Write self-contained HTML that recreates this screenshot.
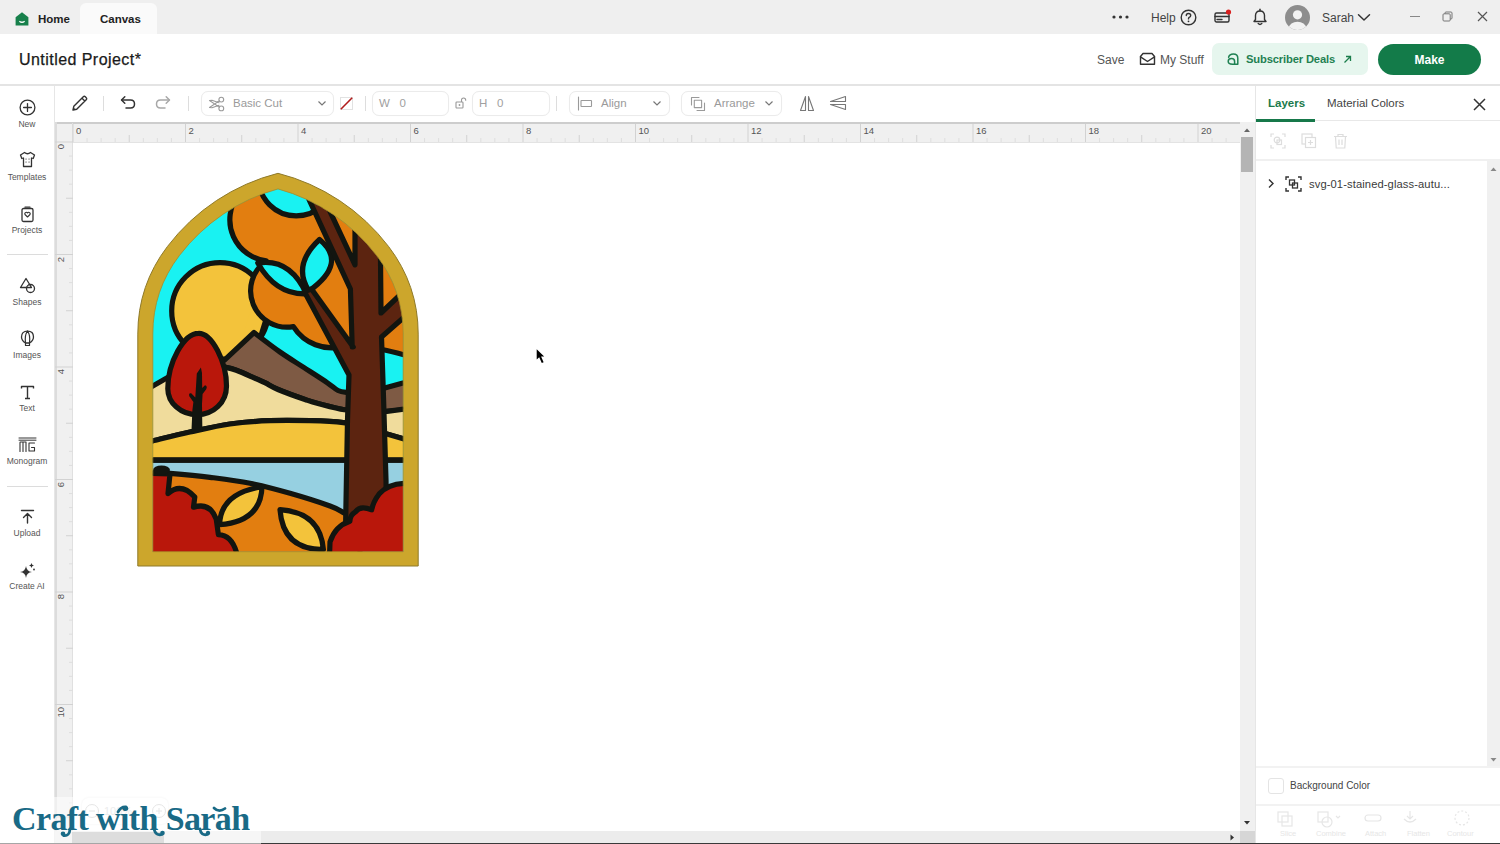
<!DOCTYPE html>
<html><head><meta charset="utf-8">
<style>
*{margin:0;padding:0;box-sizing:border-box}
html,body{width:1500px;height:844px;overflow:hidden;background:#fff;font-family:"Liberation Sans",sans-serif;color:#222}
.a{position:absolute}
.t{position:absolute;white-space:nowrap;line-height:1}
svg{position:absolute;overflow:visible}
.g{stroke:#333;fill:none;stroke-width:1.2;stroke-linecap:round;stroke-linejoin:round}
.lg{stroke:#9a9a9a;fill:none;stroke-width:1.1;stroke-linecap:round;stroke-linejoin:round}
.side{position:absolute;width:54px;left:0;text-align:center;font-size:8.5px;color:#555;line-height:1}
.box{position:absolute;border:1px solid #ebebeb;border-radius:7px;background:#fff;box-shadow:0 0 1px rgba(0,0,0,0.04)}
.ft{font-size:11.5px;color:#9a9a9a}
</style></head><body>
<!-- top bar -->
<div class="a" style="left:0;top:0;width:1500px;height:34px;background:#efefef"></div>
<div class="a" style="left:80px;top:3px;width:77px;height:31px;background:#fafafa;border-radius:6px 6px 0 0"></div>
<svg style="left:15px;top:12px" width="14" height="14" viewBox="0 0 14 14"><path d="M0.6 5.2 L7 0.3 L13.4 5.2 V13.6 H0.6 Z" fill="#17804b"/><path d="M4.4 9.2 Q7 11.3 9.6 9.2" stroke="#fff" stroke-width="1.3" fill="none"/></svg>
<div class="t" style="left:38px;top:14px;font-size:11.5px;font-weight:bold;color:#222">Home</div>
<div class="t" style="left:100px;top:14px;font-size:11.5px;font-weight:bold;color:#222">Canvas</div>
<!-- dots -->
<svg style="left:1112px;top:15px" width="17" height="4" viewBox="0 0 17 4"><circle cx="2" cy="2" r="1.6" fill="#333"/><circle cx="8.5" cy="2" r="1.6" fill="#333"/><circle cx="15" cy="2" r="1.6" fill="#333"/></svg>
<div class="t" style="left:1151px;top:12px;font-size:12px;color:#444">Help</div>
<svg style="left:1180px;top:9px" width="17" height="17" viewBox="0 0 17 17"><circle cx="8.5" cy="8.5" r="7.3" class="g" style="stroke-width:1.4"/><path d="M6.3 6.6 Q6.3 4.5 8.5 4.5 Q10.7 4.5 10.7 6.5 Q10.7 7.8 9.2 8.4 Q8.5 8.8 8.5 9.9" class="g" style="stroke-width:1.4"/><circle cx="8.5" cy="12.3" r="0.9" fill="#333"/></svg>
<svg style="left:1214px;top:9px" width="18" height="16" viewBox="0 0 18 16"><rect x="1" y="4" width="14" height="9" rx="1.5" class="g" style="stroke-width:1.4"/><path d="M1 7.5 H15 M3 10.5 H8" class="g" style="stroke-width:1.4"/><circle cx="14.5" cy="3" r="2.6" fill="#d9201f"/></svg>
<svg style="left:1252px;top:8px" width="16" height="18" viewBox="0 0 16 18"><path d="M2 13.5 H14 L12.5 11.5 V7.5 Q12.5 3 8 3 Q3.5 3 3.5 7.5 V11.5 Z" class="g" style="stroke-width:1.4"/><path d="M6.2 15.5 Q8 17.3 9.8 15.5" class="g" style="stroke-width:1.4"/><path d="M8 1.2 V3" class="g" style="stroke-width:1.4"/></svg>
<svg style="left:1285px;top:5px" width="25" height="25" viewBox="0 0 25 25"><defs><clipPath id="av"><circle cx="12.5" cy="12.5" r="12.5"/></clipPath></defs><circle cx="12.5" cy="12.5" r="12.5" fill="#8d8d8d"/><g clip-path="url(#av)"><circle cx="12.5" cy="9.8" r="4.6" fill="#f2f2f2"/><ellipse cx="12.5" cy="23" rx="8.5" ry="6.3" fill="#f2f2f2"/></g></svg>
<div class="t" style="left:1322px;top:12px;font-size:12px;color:#444">Sarah</div>
<svg style="left:1357px;top:13px" width="14" height="9" viewBox="0 0 14 9"><path d="M1.5 1.8 L7 7 L12.5 1.8" class="g" style="stroke-width:1.5"/></svg>
<div class="a" style="left:1410px;top:16px;width:10px;height:1px;background:#888"></div>
<svg style="left:1442px;top:11px" width="11" height="11" viewBox="0 0 11 11"><rect x="1" y="2.8" width="7.2" height="7.2" rx="1" fill="none" stroke="#777" stroke-width="1"/><path d="M3 2.8 V2 Q3 1 4 1 H9 Q10 1 10 2 V7 Q10 8 9 8 H8.2" fill="none" stroke="#777" stroke-width="1"/></svg>
<svg style="left:1477px;top:11px" width="11" height="11" viewBox="0 0 11 11"><path d="M1 1 L10 10 M10 1 L1 10" stroke="#555" stroke-width="1.2"/></svg>
<!-- header -->
<div class="a" style="left:0;top:34px;width:1500px;height:51px;background:#fff"></div>
<div class="t" style="left:19px;top:52px;font-size:16px;letter-spacing:0.45px;color:#1a1a1a;-webkit-text-stroke:0.25px #1a1a1a">Untitled Project*</div>
<div class="a" style="left:0;top:84px;width:1500px;height:2px;background:#e4e4e4"></div>
<div class="t" style="left:1097px;top:54px;font-size:12px;color:#555">Save</div>
<svg style="left:1139px;top:52px" width="17" height="14" viewBox="0 0 17 14"><path d="M1.5 4.5 V12.3 H15.5 V4.5 L13 1.5 H4 Z" class="g" style="stroke-width:1.4"/><path d="M1.5 4.8 L8.5 9.5 L15.5 4.8" class="g" style="stroke-width:1.4"/></svg>
<div class="t" style="left:1160px;top:54px;font-size:12px;color:#555">My Stuff</div>
<div class="a" style="left:1212px;top:43px;width:156px;height:32px;background:#e6f6ee;border-radius:7px"></div>
<svg style="left:1226px;top:52px" width="14" height="14" viewBox="0 0 14 14"><path d="M11.8 12.3 V6.2 Q11.8 2 7.3 2 Q3.5 2 2.6 5.2 M11.8 12.3 H6.5 Q2.2 12.3 2.2 9.3 Q2.2 6.6 5.6 6.6 Q8.6 6.6 8.6 9.5 V12.3" stroke="#1f8152" stroke-width="1.5" fill="none" stroke-linecap="round"/></svg>
<div class="t" style="left:1246px;top:54px;font-size:11.2px;letter-spacing:-0.15px;font-weight:bold;color:#1f8152">Subscriber Deals</div>
<svg style="left:1343px;top:55px" width="9" height="9" viewBox="0 0 9 9"><path d="M1.5 7.5 L7.5 1.5 M3 1.5 H7.5 V6" stroke="#1b7d4b" stroke-width="1.3" fill="none"/></svg>
<div class="a" style="left:1378px;top:44px;width:103px;height:31px;background:#137b49;border-radius:16px"></div>
<div class="t" style="left:1378px;top:54px;width:103px;text-align:center;font-size:12px;font-weight:bold;color:#fff">Make</div>
<!-- toolbar -->
<svg style="left:71px;top:94px" width="18" height="18" viewBox="0 0 18 18"><path d="M2 16 L2.8 12.3 L12.3 2.8 Q13.3 1.8 14.3 2.8 L15.2 3.7 Q16.2 4.7 15.2 5.7 L5.7 15.2 Z M11 4.2 L13.8 7" class="g" style="stroke-width:1.4"/><path d="M2 16 L2.6 13.4 L4.6 15.4 Z" fill="#333"/></svg>
<div class="a" style="left:103px;top:96px;width:1px;height:15px;background:#ddd"></div>
<svg style="left:119px;top:95px" width="18" height="16" viewBox="0 0 18 16"><path d="M3 5 H11.5 Q15.5 5 15.5 9 Q15.5 13 11.5 13 H7" class="g" style="stroke-width:1.5"/><path d="M5.8 1.8 L2.5 5 L5.8 8.2" class="g" style="stroke-width:1.5"/></svg>
<svg style="left:154px;top:95px" width="18" height="16" viewBox="0 0 18 16"><path d="M15 5 H6.5 Q2.5 5 2.5 9 Q2.5 13 6.5 13 H11" class="lg" style="stroke-width:1.5;stroke:#a8a8a8"/><path d="M12.2 1.8 L15.5 5 L12.2 8.2" class="lg" style="stroke-width:1.5;stroke:#a8a8a8"/></svg>
<div class="a" style="left:188px;top:96px;width:1px;height:15px;background:#ddd"></div>

<div class="box" style="left:201px;top:91px;width:133px;height:25px"></div>
<svg style="left:208px;top:96px" width="18" height="16" viewBox="0 0 18 16"><circle cx="13.3" cy="3.6" r="2.4" class="lg"/><circle cx="13.3" cy="12.4" r="2.4" class="lg"/><path d="M11.3 4.9 L1.5 11.5 L4 11.8 L11 9.3 M11.3 11.1 L1.5 4.5 L4 4.2 L11 6.7" class="lg"/></svg>
<div class="t ft" style="left:233px;top:98px">Basic Cut</div>
<svg style="left:317px;top:100px" width="10" height="7" viewBox="0 0 10 7"><path d="M1.5 1.5 L5 5 L8.5 1.5" stroke="#777" stroke-width="1.2" fill="none"/></svg>
<div class="a" style="left:340px;top:97px;width:13px;height:13px;border:1px solid #e2e2e2"></div>
<svg style="left:340px;top:97px" width="13" height="13" viewBox="0 0 13 13"><path d="M0.8 12.2 L12.2 0.8" stroke="#b01c1c" stroke-width="1.6"/></svg>
<div class="a" style="left:365px;top:96px;width:1px;height:15px;background:#ddd"></div>

<div class="box" style="left:372px;top:91px;width:77px;height:25px"></div>
<div class="t ft" style="left:379px;top:98px;color:#a0a0a0">W&nbsp;&nbsp;&nbsp;0</div>
<svg style="left:455px;top:97px" width="13" height="12" viewBox="0 0 13 12"><rect x="1" y="5" width="7" height="6" rx="0.8" stroke="#999" stroke-width="1.1" fill="none"/><path d="M6.5 5 V3.2 Q6.5 1 8.6 1 Q10.7 1 10.7 3.2 V3.8" stroke="#999" stroke-width="1.1" fill="none"/><circle cx="4.5" cy="8" r="0.9" fill="#999"/></svg>
<div class="box" style="left:472px;top:91px;width:78px;height:25px"></div>
<div class="t ft" style="left:479px;top:98px;color:#a0a0a0">H&nbsp;&nbsp;&nbsp;0</div>
<div class="a" style="left:556px;top:96px;width:1px;height:15px;background:#ddd"></div>

<div class="box" style="left:569px;top:91px;width:101px;height:25px"></div>
<svg style="left:577px;top:96px" width="16" height="15" viewBox="0 0 16 15"><path d="M1.5 1 V14" class="lg"/><rect x="4" y="4.5" width="10.5" height="6" rx="0.5" class="lg"/></svg>
<div class="t ft" style="left:601px;top:98px">Align</div>
<svg style="left:652px;top:100px" width="10" height="7" viewBox="0 0 10 7"><path d="M1.5 1.5 L5 5 L8.5 1.5" stroke="#777" stroke-width="1.2" fill="none"/></svg>

<div class="box" style="left:681px;top:91px;width:101px;height:25px"></div>
<svg style="left:690px;top:96px" width="16" height="16" viewBox="0 0 16 16"><path d="M1.5 9 V1.5 H9" class="lg"/><rect x="4.3" y="4.3" width="7.3" height="7.3" class="lg"/><path d="M7 14.5 H14.5 V7" class="lg"/></svg>
<div class="t ft" style="left:714px;top:98px">Arrange</div>
<svg style="left:764px;top:100px" width="10" height="7" viewBox="0 0 10 7"><path d="M1.5 1.5 L5 5 L8.5 1.5" stroke="#777" stroke-width="1.2" fill="none"/></svg>

<svg style="left:799px;top:95px" width="16" height="17" viewBox="0 0 16 17"><path d="M6.5 1.5 L1.5 15.5 H6.5 Z M9.5 1.5 L14.5 15.5 H9.5 Z" class="lg" style="stroke:#777"/></svg>
<svg style="left:829px;top:95px" width="18" height="16" viewBox="0 0 18 16"><path d="M16.5 1.5 L1.5 6.5 H16.5 Z M16.5 14.5 L1.5 9.5 H16.5 Z" class="lg" style="stroke:#777"/></svg>
<!-- sidebar -->
<div class="a" style="left:54px;top:86px;width:1px;height:758px;background:#e6e6e6"></div>
<svg style="left:19px;top:99px" width="17" height="17" viewBox="0 0 17 17"><circle cx="8.5" cy="8.5" r="7.4" class="g" style="stroke-width:1.3"/><path d="M8.5 4.6 V12.4 M4.6 8.5 H12.4" class="g" style="stroke-width:1.3"/></svg>
<div class="side" style="top:120px">New</div>
<svg style="left:19px;top:151px" width="17" height="17" viewBox="0 0 17 17"><path d="M5.5 1.5 L1.5 4 L2.8 7.5 L4.5 7 V15.5 H12.5 V7 L14.2 7.5 L15.5 4 L11.5 1.5 Q8.5 4 5.5 1.5 Z" class="g" style="stroke-width:1.3"/><path d="M7 8 H7.1 M10 8 H10.1 M7 11 H7.1 M10 11 H10.1" class="g" style="stroke-width:1.2"/></svg>
<div class="side" style="top:173px">Templates</div>
<svg style="left:20px;top:206px" width="15" height="17" viewBox="0 0 15 17"><rect x="2" y="2.5" width="11" height="13" rx="1.5" class="g" style="stroke-width:1.3"/><path d="M5 1.2 H10" class="g" style="stroke-width:1.3"/><path d="M7.5 11 L5 8.5 Q4.3 7 5.8 6.4 Q6.9 6 7.5 7 Q8.1 6 9.2 6.4 Q10.7 7 10 8.5 Z" class="g" style="stroke-width:1.1"/></svg>
<div class="side" style="top:226px">Projects</div>
<div class="a" style="left:7px;top:254px;width:41px;height:1px;background:#dcdcdc"></div>
<svg style="left:19px;top:277px" width="17" height="17" viewBox="0 0 17 17"><path d="M7 1.5 L1.5 10.5 H12.5 Z" class="g" style="stroke-width:1.3"/><circle cx="11.5" cy="11.5" r="4" class="g" style="stroke-width:1.3" fill="#fff"/></svg>
<div class="side" style="top:298px">Shapes</div>
<svg style="left:20px;top:330px" width="15" height="18" viewBox="0 0 15 18"><path d="M7.5 1.2 Q13.5 1.2 13.5 7 Q13.5 10.5 9.5 13 H5.5 Q1.5 10.5 1.5 7 Q1.5 1.2 7.5 1.2 Z" class="g" style="stroke-width:1.3"/><path d="M7.5 1.2 Q4.5 5 5.5 13 M7.5 1.2 Q10.5 5 9.5 13 M5.5 15.5 H9.5 M5.5 13 V15.5 M9.5 13 V15.5" class="g" style="stroke-width:1.2"/></svg>
<div class="side" style="top:351px">Images</div>
<svg style="left:20px;top:385px" width="15" height="15" viewBox="0 0 15 15"><path d="M1.5 3.5 V1.5 H13.5 V3.5 M7.5 1.5 V13.5 M5 13.5 H10" class="g" style="stroke-width:1.4;stroke-linecap:butt"/></svg>
<div class="side" style="top:404px">Text</div>
<svg style="left:18px;top:437px" width="19" height="16" viewBox="0 0 19 16"><path d="M1 1 H18 M1 3.2 H18" class="g" style="stroke-width:1"/><path d="M2 14.5 V5.5 Q2 5 2.5 5 H8 V14.5 M5 5 V14.5" class="g" style="stroke-width:1.1"/><path d="M16.5 6 H11 V14 H16.5 V10.5 H13.5" class="g" style="stroke-width:1.1"/></svg>
<div class="side" style="top:457px">Monogram</div>
<div class="a" style="left:7px;top:486px;width:41px;height:1px;background:#dcdcdc"></div>
<svg style="left:20px;top:509px" width="15" height="15" viewBox="0 0 15 15"><path d="M1.5 1.5 H13.5 M7.5 14 V4.5 M3.5 8.5 L7.5 4.5 L11.5 8.5" class="g" style="stroke-width:1.4"/></svg>
<div class="side" style="top:529px">Upload</div>
<svg style="left:19px;top:562px" width="17" height="17" viewBox="0 0 17 17"><path d="M7 4 Q7.6 9.4 13 10 Q7.6 10.6 7 16 Q6.4 10.6 1 10 Q6.4 9.4 7 4 Z" fill="#333"/><path d="M12.5 1 Q12.8 3.2 15 3.5 Q12.8 3.8 12.5 6 Q12.2 3.8 10 3.5 Q12.2 3.2 12.5 1 Z" fill="#333"/><circle cx="15" cy="7.5" r="0.9" fill="#333"/></svg>
<div class="side" style="top:582px">Create AI</div>
<!-- rulers -->
<div class="a" style="left:55px;top:122px;width:1185px;height:21px;background:#f0f0f0"></div>
<div class="a" style="left:55px;top:122px;width:1185px;height:2px;background:#cdcdcd"></div>
<div class="a" style="left:55px;top:142px;width:1185px;height:1px;background:#e3e3e3"></div>
<div class="a" style="left:55px;top:142px;width:18px;height:689px;background:#f0f0f0"></div>
<div class="a" style="left:55px;top:122px;width:2px;height:709px;background:#dcdcdc"></div>
<div class="a" style="left:72px;top:123px;width:1px;height:708px;background:#e0e0e0"></div>
<svg style="left:0;top:0" width="1500" height="844"><line x1="73.00" y1="124" x2="73.00" y2="142" stroke="#d2d2d2" stroke-width="1"/><line x1="87.06" y1="138" x2="87.06" y2="142" stroke="#dedede" stroke-width="1"/><line x1="101.12" y1="138" x2="101.12" y2="142" stroke="#dedede" stroke-width="1"/><line x1="115.19" y1="138" x2="115.19" y2="142" stroke="#dedede" stroke-width="1"/><line x1="129.25" y1="135" x2="129.25" y2="142" stroke="#d2d2d2" stroke-width="1"/><line x1="143.31" y1="138" x2="143.31" y2="142" stroke="#dedede" stroke-width="1"/><line x1="157.38" y1="138" x2="157.38" y2="142" stroke="#dedede" stroke-width="1"/><line x1="171.44" y1="138" x2="171.44" y2="142" stroke="#dedede" stroke-width="1"/><line x1="185.50" y1="124" x2="185.50" y2="142" stroke="#d2d2d2" stroke-width="1"/><line x1="199.56" y1="138" x2="199.56" y2="142" stroke="#dedede" stroke-width="1"/><line x1="213.62" y1="138" x2="213.62" y2="142" stroke="#dedede" stroke-width="1"/><line x1="227.69" y1="138" x2="227.69" y2="142" stroke="#dedede" stroke-width="1"/><line x1="241.75" y1="135" x2="241.75" y2="142" stroke="#d2d2d2" stroke-width="1"/><line x1="255.81" y1="138" x2="255.81" y2="142" stroke="#dedede" stroke-width="1"/><line x1="269.88" y1="138" x2="269.88" y2="142" stroke="#dedede" stroke-width="1"/><line x1="283.94" y1="138" x2="283.94" y2="142" stroke="#dedede" stroke-width="1"/><line x1="298.00" y1="124" x2="298.00" y2="142" stroke="#d2d2d2" stroke-width="1"/><line x1="312.06" y1="138" x2="312.06" y2="142" stroke="#dedede" stroke-width="1"/><line x1="326.12" y1="138" x2="326.12" y2="142" stroke="#dedede" stroke-width="1"/><line x1="340.19" y1="138" x2="340.19" y2="142" stroke="#dedede" stroke-width="1"/><line x1="354.25" y1="135" x2="354.25" y2="142" stroke="#d2d2d2" stroke-width="1"/><line x1="368.31" y1="138" x2="368.31" y2="142" stroke="#dedede" stroke-width="1"/><line x1="382.38" y1="138" x2="382.38" y2="142" stroke="#dedede" stroke-width="1"/><line x1="396.44" y1="138" x2="396.44" y2="142" stroke="#dedede" stroke-width="1"/><line x1="410.50" y1="124" x2="410.50" y2="142" stroke="#d2d2d2" stroke-width="1"/><line x1="424.56" y1="138" x2="424.56" y2="142" stroke="#dedede" stroke-width="1"/><line x1="438.62" y1="138" x2="438.62" y2="142" stroke="#dedede" stroke-width="1"/><line x1="452.69" y1="138" x2="452.69" y2="142" stroke="#dedede" stroke-width="1"/><line x1="466.75" y1="135" x2="466.75" y2="142" stroke="#d2d2d2" stroke-width="1"/><line x1="480.81" y1="138" x2="480.81" y2="142" stroke="#dedede" stroke-width="1"/><line x1="494.88" y1="138" x2="494.88" y2="142" stroke="#dedede" stroke-width="1"/><line x1="508.94" y1="138" x2="508.94" y2="142" stroke="#dedede" stroke-width="1"/><line x1="523.00" y1="124" x2="523.00" y2="142" stroke="#d2d2d2" stroke-width="1"/><line x1="537.06" y1="138" x2="537.06" y2="142" stroke="#dedede" stroke-width="1"/><line x1="551.12" y1="138" x2="551.12" y2="142" stroke="#dedede" stroke-width="1"/><line x1="565.19" y1="138" x2="565.19" y2="142" stroke="#dedede" stroke-width="1"/><line x1="579.25" y1="135" x2="579.25" y2="142" stroke="#d2d2d2" stroke-width="1"/><line x1="593.31" y1="138" x2="593.31" y2="142" stroke="#dedede" stroke-width="1"/><line x1="607.38" y1="138" x2="607.38" y2="142" stroke="#dedede" stroke-width="1"/><line x1="621.44" y1="138" x2="621.44" y2="142" stroke="#dedede" stroke-width="1"/><line x1="635.50" y1="124" x2="635.50" y2="142" stroke="#d2d2d2" stroke-width="1"/><line x1="649.56" y1="138" x2="649.56" y2="142" stroke="#dedede" stroke-width="1"/><line x1="663.62" y1="138" x2="663.62" y2="142" stroke="#dedede" stroke-width="1"/><line x1="677.69" y1="138" x2="677.69" y2="142" stroke="#dedede" stroke-width="1"/><line x1="691.75" y1="135" x2="691.75" y2="142" stroke="#d2d2d2" stroke-width="1"/><line x1="705.81" y1="138" x2="705.81" y2="142" stroke="#dedede" stroke-width="1"/><line x1="719.88" y1="138" x2="719.88" y2="142" stroke="#dedede" stroke-width="1"/><line x1="733.94" y1="138" x2="733.94" y2="142" stroke="#dedede" stroke-width="1"/><line x1="748.00" y1="124" x2="748.00" y2="142" stroke="#d2d2d2" stroke-width="1"/><line x1="762.06" y1="138" x2="762.06" y2="142" stroke="#dedede" stroke-width="1"/><line x1="776.12" y1="138" x2="776.12" y2="142" stroke="#dedede" stroke-width="1"/><line x1="790.19" y1="138" x2="790.19" y2="142" stroke="#dedede" stroke-width="1"/><line x1="804.25" y1="135" x2="804.25" y2="142" stroke="#d2d2d2" stroke-width="1"/><line x1="818.31" y1="138" x2="818.31" y2="142" stroke="#dedede" stroke-width="1"/><line x1="832.38" y1="138" x2="832.38" y2="142" stroke="#dedede" stroke-width="1"/><line x1="846.44" y1="138" x2="846.44" y2="142" stroke="#dedede" stroke-width="1"/><line x1="860.50" y1="124" x2="860.50" y2="142" stroke="#d2d2d2" stroke-width="1"/><line x1="874.56" y1="138" x2="874.56" y2="142" stroke="#dedede" stroke-width="1"/><line x1="888.62" y1="138" x2="888.62" y2="142" stroke="#dedede" stroke-width="1"/><line x1="902.69" y1="138" x2="902.69" y2="142" stroke="#dedede" stroke-width="1"/><line x1="916.75" y1="135" x2="916.75" y2="142" stroke="#d2d2d2" stroke-width="1"/><line x1="930.81" y1="138" x2="930.81" y2="142" stroke="#dedede" stroke-width="1"/><line x1="944.88" y1="138" x2="944.88" y2="142" stroke="#dedede" stroke-width="1"/><line x1="958.94" y1="138" x2="958.94" y2="142" stroke="#dedede" stroke-width="1"/><line x1="973.00" y1="124" x2="973.00" y2="142" stroke="#d2d2d2" stroke-width="1"/><line x1="987.06" y1="138" x2="987.06" y2="142" stroke="#dedede" stroke-width="1"/><line x1="1001.12" y1="138" x2="1001.12" y2="142" stroke="#dedede" stroke-width="1"/><line x1="1015.19" y1="138" x2="1015.19" y2="142" stroke="#dedede" stroke-width="1"/><line x1="1029.25" y1="135" x2="1029.25" y2="142" stroke="#d2d2d2" stroke-width="1"/><line x1="1043.31" y1="138" x2="1043.31" y2="142" stroke="#dedede" stroke-width="1"/><line x1="1057.38" y1="138" x2="1057.38" y2="142" stroke="#dedede" stroke-width="1"/><line x1="1071.44" y1="138" x2="1071.44" y2="142" stroke="#dedede" stroke-width="1"/><line x1="1085.50" y1="124" x2="1085.50" y2="142" stroke="#d2d2d2" stroke-width="1"/><line x1="1099.56" y1="138" x2="1099.56" y2="142" stroke="#dedede" stroke-width="1"/><line x1="1113.62" y1="138" x2="1113.62" y2="142" stroke="#dedede" stroke-width="1"/><line x1="1127.69" y1="138" x2="1127.69" y2="142" stroke="#dedede" stroke-width="1"/><line x1="1141.75" y1="135" x2="1141.75" y2="142" stroke="#d2d2d2" stroke-width="1"/><line x1="1155.81" y1="138" x2="1155.81" y2="142" stroke="#dedede" stroke-width="1"/><line x1="1169.88" y1="138" x2="1169.88" y2="142" stroke="#dedede" stroke-width="1"/><line x1="1183.94" y1="138" x2="1183.94" y2="142" stroke="#dedede" stroke-width="1"/><line x1="1198.00" y1="124" x2="1198.00" y2="142" stroke="#d2d2d2" stroke-width="1"/><line x1="1212.06" y1="138" x2="1212.06" y2="142" stroke="#dedede" stroke-width="1"/><line x1="1226.12" y1="138" x2="1226.12" y2="142" stroke="#dedede" stroke-width="1"/><line x1="55" y1="142.00" x2="73" y2="142.00" stroke="#d2d2d2" stroke-width="1"/><line x1="69" y1="156.06" x2="73" y2="156.06" stroke="#dedede" stroke-width="1"/><line x1="69" y1="170.12" x2="73" y2="170.12" stroke="#dedede" stroke-width="1"/><line x1="69" y1="184.19" x2="73" y2="184.19" stroke="#dedede" stroke-width="1"/><line x1="66" y1="198.25" x2="73" y2="198.25" stroke="#d2d2d2" stroke-width="1"/><line x1="69" y1="212.31" x2="73" y2="212.31" stroke="#dedede" stroke-width="1"/><line x1="69" y1="226.38" x2="73" y2="226.38" stroke="#dedede" stroke-width="1"/><line x1="69" y1="240.44" x2="73" y2="240.44" stroke="#dedede" stroke-width="1"/><line x1="55" y1="254.50" x2="73" y2="254.50" stroke="#d2d2d2" stroke-width="1"/><line x1="69" y1="268.56" x2="73" y2="268.56" stroke="#dedede" stroke-width="1"/><line x1="69" y1="282.62" x2="73" y2="282.62" stroke="#dedede" stroke-width="1"/><line x1="69" y1="296.69" x2="73" y2="296.69" stroke="#dedede" stroke-width="1"/><line x1="66" y1="310.75" x2="73" y2="310.75" stroke="#d2d2d2" stroke-width="1"/><line x1="69" y1="324.81" x2="73" y2="324.81" stroke="#dedede" stroke-width="1"/><line x1="69" y1="338.88" x2="73" y2="338.88" stroke="#dedede" stroke-width="1"/><line x1="69" y1="352.94" x2="73" y2="352.94" stroke="#dedede" stroke-width="1"/><line x1="55" y1="367.00" x2="73" y2="367.00" stroke="#d2d2d2" stroke-width="1"/><line x1="69" y1="381.06" x2="73" y2="381.06" stroke="#dedede" stroke-width="1"/><line x1="69" y1="395.12" x2="73" y2="395.12" stroke="#dedede" stroke-width="1"/><line x1="69" y1="409.19" x2="73" y2="409.19" stroke="#dedede" stroke-width="1"/><line x1="66" y1="423.25" x2="73" y2="423.25" stroke="#d2d2d2" stroke-width="1"/><line x1="69" y1="437.31" x2="73" y2="437.31" stroke="#dedede" stroke-width="1"/><line x1="69" y1="451.38" x2="73" y2="451.38" stroke="#dedede" stroke-width="1"/><line x1="69" y1="465.44" x2="73" y2="465.44" stroke="#dedede" stroke-width="1"/><line x1="55" y1="479.50" x2="73" y2="479.50" stroke="#d2d2d2" stroke-width="1"/><line x1="69" y1="493.56" x2="73" y2="493.56" stroke="#dedede" stroke-width="1"/><line x1="69" y1="507.62" x2="73" y2="507.62" stroke="#dedede" stroke-width="1"/><line x1="69" y1="521.69" x2="73" y2="521.69" stroke="#dedede" stroke-width="1"/><line x1="66" y1="535.75" x2="73" y2="535.75" stroke="#d2d2d2" stroke-width="1"/><line x1="69" y1="549.81" x2="73" y2="549.81" stroke="#dedede" stroke-width="1"/><line x1="69" y1="563.88" x2="73" y2="563.88" stroke="#dedede" stroke-width="1"/><line x1="69" y1="577.94" x2="73" y2="577.94" stroke="#dedede" stroke-width="1"/><line x1="55" y1="592.00" x2="73" y2="592.00" stroke="#d2d2d2" stroke-width="1"/><line x1="69" y1="606.06" x2="73" y2="606.06" stroke="#dedede" stroke-width="1"/><line x1="69" y1="620.12" x2="73" y2="620.12" stroke="#dedede" stroke-width="1"/><line x1="69" y1="634.19" x2="73" y2="634.19" stroke="#dedede" stroke-width="1"/><line x1="66" y1="648.25" x2="73" y2="648.25" stroke="#d2d2d2" stroke-width="1"/><line x1="69" y1="662.31" x2="73" y2="662.31" stroke="#dedede" stroke-width="1"/><line x1="69" y1="676.38" x2="73" y2="676.38" stroke="#dedede" stroke-width="1"/><line x1="69" y1="690.44" x2="73" y2="690.44" stroke="#dedede" stroke-width="1"/><line x1="55" y1="704.50" x2="73" y2="704.50" stroke="#d2d2d2" stroke-width="1"/><line x1="69" y1="718.56" x2="73" y2="718.56" stroke="#dedede" stroke-width="1"/><line x1="69" y1="732.62" x2="73" y2="732.62" stroke="#dedede" stroke-width="1"/><line x1="69" y1="746.69" x2="73" y2="746.69" stroke="#dedede" stroke-width="1"/><line x1="66" y1="760.75" x2="73" y2="760.75" stroke="#d2d2d2" stroke-width="1"/><line x1="69" y1="774.81" x2="73" y2="774.81" stroke="#dedede" stroke-width="1"/><line x1="69" y1="788.88" x2="73" y2="788.88" stroke="#dedede" stroke-width="1"/><line x1="69" y1="802.94" x2="73" y2="802.94" stroke="#dedede" stroke-width="1"/><line x1="55" y1="817.00" x2="73" y2="817.00" stroke="#d2d2d2" stroke-width="1"/></svg>
<div class="t" style="left:76.0px;top:126px;font-size:9.5px;color:#555">0</div>
<div class="t" style="left:188.5px;top:126px;font-size:9.5px;color:#555">2</div>
<div class="t" style="left:301.0px;top:126px;font-size:9.5px;color:#555">4</div>
<div class="t" style="left:413.5px;top:126px;font-size:9.5px;color:#555">6</div>
<div class="t" style="left:526.0px;top:126px;font-size:9.5px;color:#555">8</div>
<div class="t" style="left:638.5px;top:126px;font-size:9.5px;color:#555">10</div>
<div class="t" style="left:751.0px;top:126px;font-size:9.5px;color:#555">12</div>
<div class="t" style="left:863.5px;top:126px;font-size:9.5px;color:#555">14</div>
<div class="t" style="left:976.0px;top:126px;font-size:9.5px;color:#555">16</div>
<div class="t" style="left:1088.5px;top:126px;font-size:9.5px;color:#555">18</div>
<div class="t" style="left:1201.0px;top:126px;font-size:9.5px;color:#555">20</div>
<div class="t" style="left:55.5px;top:144.0px;writing-mode:vertical-rl;transform:rotate(180deg);font-size:9.5px;color:#555">0</div>
<div class="t" style="left:55.5px;top:256.5px;writing-mode:vertical-rl;transform:rotate(180deg);font-size:9.5px;color:#555">2</div>
<div class="t" style="left:55.5px;top:369.0px;writing-mode:vertical-rl;transform:rotate(180deg);font-size:9.5px;color:#555">4</div>
<div class="t" style="left:55.5px;top:481.5px;writing-mode:vertical-rl;transform:rotate(180deg);font-size:9.5px;color:#555">6</div>
<div class="t" style="left:55.5px;top:594.0px;writing-mode:vertical-rl;transform:rotate(180deg);font-size:9.5px;color:#555">8</div>
<div class="t" style="left:55.5px;top:706.5px;writing-mode:vertical-rl;transform:rotate(180deg);font-size:9.5px;color:#555">10</div>
<!-- art -->
<svg style="left:0;top:0" width="1500" height="844" viewBox="0 0 1500 844">
<defs><clipPath id="ia"><path d="M152.8,551.7 L152.8,334.1 A129.6,129.6 0 0 1 179.4,255.5 A186.5,186.5 0 0 1 278,188.9 A186.5,186.5 0 0 1 376.6,255.5 A129.6,129.6 0 0 1 403.2,334.1 L403.2,551.7 Z"/></clipPath></defs>
<path d="M137.8,566 L137.8,334.1 A144.6,144.6 0 0 1 167.5,246.4 A201.5,201.5 0 0 1 278,173.3 A201.5,201.5 0 0 1 388.5,246.4 A144.6,144.6 0 0 1 418.2,334.1 L418.2,566 Z" fill="#cca62c" stroke="#8f7a2a" stroke-width="1"/>
<g clip-path="url(#ia)" stroke="#121510" stroke-width="5.2" stroke-linejoin="round">
<rect x="140" y="180" width="280" height="380" fill="#19f2f2" stroke="none"/>
<circle cx="220" cy="310.9" r="48.3" fill="#f3c33b"/>
<path d="M250,312 L266,319.5 L261,335.5 L240,345 Z" fill="#f3c33b" stroke="none"/>
<path d="M266,319.5 L261,335.5" fill="none"/>
<path d="M 300.0,150.0 L 233.0,150.0 L 237.3,196.1 A 41.4 41.4 0 0 0 266.2,260.9 A 36.4 36.4 0 0 0 293.4,326.6 A 45.8 45.8 0 0 0 344.0,346.3 L 360,350 L 382,349.5 Q 394,352 412,357 L 430,357 L 430,150 Z" fill="#e27e10"/>
<circle cx="296.2" cy="178.2" r="37.6" fill="#19f2f2"/>
<path d="M257.8,263 Q289.9,257.6 306.4,293.8 Q275.9,295 257.8,263 Z" fill="#19f2f2"/>
<path d="M319.5,239.5 Q292,265 309,291 Q348,263 319.5,239.5 Z" fill="#19f2f2"/>
<path d="M205,375 L224.2,360.3 L254,332.5 L254.0,332.5 C258.3,335.8 271.7,346.2 280.0,352.0 C288.3,357.8 295.8,362.3 303.7,367.4 C311.6,372.5 321.7,378.9 327.4,382.8 C333.1,386.7 334.6,388.9 338.0,390.5 C341.4,392.1 346.3,392.2 348.0,392.5 L360,395 L384.7,388 L403,383 L412,382 L412,409 L386.9,411.4 L365,410.5 L365.0,410.5 C361.6,410.4 352.1,411.0 344.3,409.8 C336.5,408.6 324.6,405.2 318.0,403.5 C311.4,401.8 311.7,401.8 305.0,399.5 C298.3,397.2 284.7,392.3 278.0,389.5 C271.3,386.7 269.4,384.9 264.8,382.7 C260.2,380.5 255.2,378.4 250.5,376.3 C245.8,374.2 240.4,371.8 236.3,370.3 C232.2,368.8 229.2,368.1 225.7,367.4 C222.1,366.7 216.8,366.2 215.0,366.0 Z" fill="#7e5a44"/>
<path d="M145,390.5 L152.8,386 L172,375 L200,368 L215.0,366.0 C216.8,366.2 222.1,366.7 225.7,367.4 C229.2,368.1 232.2,368.8 236.3,370.3 C240.4,371.8 245.8,374.2 250.5,376.3 C255.2,378.4 260.2,380.5 264.8,382.7 C269.4,384.9 271.3,386.7 278.0,389.5 C284.7,392.3 298.3,397.2 305.0,399.5 C311.7,401.8 311.4,401.8 318.0,403.5 C324.6,405.2 336.5,408.6 344.3,409.8 C352.1,411.0 361.6,410.4 365.0,410.5 L386.9,411.4 L404,409 L412,409 L412,441 L404,438.9 L386.9,434 L365.0,428.0 C361.4,427.1 352.5,423.9 343.3,422.7 C334.1,421.5 322.2,421.0 310.0,420.7 C297.8,420.4 283.3,420.1 270.0,420.7 C256.7,421.2 243.3,422.1 230.0,424.0 C216.7,425.9 202.9,429.2 190.0,432.0 C177.1,434.8 160.2,439.1 152.7,440.9 C145.2,442.6 146.3,442.2 145.0,442.5 Z" fill="#f0dc9c"/>
<path d="M145.0,442.5 C146.3,442.2 145.2,442.6 152.7,440.9 C160.2,439.1 177.1,434.8 190.0,432.0 C202.9,429.2 216.7,425.9 230.0,424.0 C243.3,422.1 256.7,421.2 270.0,420.7 C283.3,420.1 297.8,420.4 310.0,420.7 C322.2,421.0 334.1,421.5 343.3,422.7 C352.5,423.9 361.4,427.1 365.0,428.0 L386.9,434 L404,438.9 L412,441 L412,460.2 L145,460.2 Z" fill="#f3c33b"/>
<path d="M140,460.2 L420,460.2 L420,560 L140,560 Z" fill="#96d0e1"/>
<path d="M140.0,472.5 C142.1,472.5 147.7,472.6 152.7,472.7 C157.7,472.8 160.4,472.5 170.0,473.3 C179.6,474.1 196.7,475.6 210.0,477.3 C223.3,479.0 236.7,480.6 250.0,483.3 C263.3,486.0 276.7,489.5 290.0,493.3 C303.3,497.1 320.9,502.7 330.0,506.0 C339.1,509.3 339.7,510.6 344.7,513.3 C349.7,516.0 357.4,520.5 360.0,522.0 L360,570 L140,570 Z" fill="#e27e10"/>
<path d="M140,460.2 L420,460.2" fill="none" stroke-width="5"/>
<path d="M345.6,525 L347.5,420 L349,375 L304.3,291.5 L311.5,289 L353.2,347 L352.2,347 L350.4,289 L300,180 L313.4,176 L355,264.8 L355,200 L380.5,200 L380.5,259 L381,313 L410,285.5 L410,312 L381.5,337 L383.6,400 L386,480 L386.5,525 Z" fill="#5c2410"/>
<path d="M198.5,333.3 C212,333 226.5,362 226.5,386 C226.5,403 213,414.7 197.2,414.7 C181,414.7 167.8,403 167.8,388.7 C167.8,362 184,333.3 198.5,333.3 Z" fill="#b9170b"/>
<path d="M200.9,367.5 L202,373 L202.2,388 L205,385.3 Q207.8,386.3 206.2,389.2 L202.6,394 L202,404 L202.4,432 L191.4,432 L192.4,410 L193.4,402 L189.3,396.2 Q188.4,392.6 191.2,393.3 L195.3,397.5 L196.8,373.5 Z" fill="#121510" stroke="none"/>
<path d="M140,475 L152,473.5 L170,474 L168,493.6 Q181,482 194.8,497 L193.5,507.2 Q210,502 216.2,519 L218.4,534.6 Q232,535 237,554 L237,570 L140,570 Z" fill="#b9170b"/>
<ellipse cx="161.5" cy="470" rx="8.5" ry="4.6" fill="#121510" stroke="none"/>
<path d="M420,483 L404,483.3 Q388,484 379.3,493.7 Q373,502 371.7,509.8 Q360,505 355.6,511.7 Q350,515 349.9,521.2 Q335,526 330,542 L329,570 L420,570 Z" fill="#b9170b"/>
<path d="M219.6,524.7 Q220.5,493 262,486.7 Q261,521.5 219.6,524.7 Z" fill="#f3c33b"/>
<path d="M280,509.7 Q320.3,512.4 323.4,549.5 Q282.9,549.6 280,509.7 Z" fill="#f3c33b"/>
</g>
<path d="M152.8,551.7 L152.8,334.1 A129.6,129.6 0 0 1 179.4,255.5 A186.5,186.5 0 0 1 278,188.9 A186.5,186.5 0 0 1 376.6,255.5 A129.6,129.6 0 0 1 403.2,334.1 L403.2,551.7 Z" fill="none" stroke="#a88a25" stroke-width="0.8"/>
</svg>
<!-- canvas scrollbars -->
<div class="a" style="left:1240px;top:122px;width:15px;height:709px;background:#f0f0f0"></div>
<div class="a" style="left:1241px;top:137px;width:12px;height:35px;background:#b4b4b4"></div>
<svg style="left:1242px;top:127px" width="10" height="6" viewBox="0 0 10 6"><path d="M2 5 L5 1.5 L8 5 Z" fill="#666"/></svg>
<svg style="left:1242px;top:820px" width="10" height="6" viewBox="0 0 10 6"><path d="M2 1 L5 4.5 L8 1 Z" fill="#333"/></svg>
<div class="a" style="left:55px;top:831px;width:1185px;height:12px;background:#ececec"></div>
<div class="a" style="left:72px;top:832px;width:92px;height:11px;background:#b4b4b4"></div>
<div class="a" style="left:1240px;top:831px;width:15px;height:12px;background:#d6d6d6"></div>
<svg style="left:1229px;top:833px" width="6" height="9" viewBox="0 0 6 9"><path d="M1.5 1.5 L5 4.5 L1.5 7.5 Z" fill="#333"/></svg>
<!-- right panel -->
<div class="a" style="left:1255px;top:86px;width:245px;height:758px;background:#fff"></div>
<div class="a" style="left:1255px;top:86px;width:1px;height:758px;background:#e6e6e6"></div>
<div class="t" style="left:1268px;top:98px;font-size:11.5px;font-weight:bold;color:#1b7a4b">Layers</div>
<div class="t" style="left:1327px;top:98px;font-size:11.5px;color:#444">Material Colors</div>
<div class="a" style="left:1256px;top:120px;width:244px;height:1px;background:#e8e8e8"></div>
<div class="a" style="left:1256px;top:119px;width:59px;height:2.5px;background:#16784a"></div>
<svg style="left:1473px;top:98px" width="13" height="13" viewBox="0 0 13 13"><path d="M1 1 L12 12 M12 1 L1 12" stroke="#333" stroke-width="1.5"/></svg>
<svg style="left:1270px;top:133px" width="16" height="16" viewBox="0 0 16 16"><path d="M1 4 V1 H4 M12 1 H15 V4 M15 12 V15 H12 M4 15 H1 V12" stroke="#ddd" stroke-width="1.2" fill="none"/><circle cx="7" cy="7" r="2.8" stroke="#ddd" stroke-width="1.2" fill="none"/><rect x="7" y="7" width="4.5" height="4.5" stroke="#ddd" stroke-width="1.2" fill="none"/></svg>
<svg style="left:1301px;top:133px" width="16" height="16" viewBox="0 0 16 16"><rect x="1" y="1" width="10" height="10" stroke="#ddd" stroke-width="1.2" fill="none"/><rect x="4.5" y="4.5" width="10" height="10" stroke="#ddd" stroke-width="1.2" fill="#fff"/><path d="M9.5 7 V12 M7 9.5 H12" stroke="#ddd" stroke-width="1.2"/></svg>
<svg style="left:1333px;top:133px" width="15" height="16" viewBox="0 0 15 16"><path d="M1 3.5 H14 M5 3.5 V1.5 H10 V3.5 M2.5 3.5 L3.2 15 H11.8 L12.5 3.5 M6 6.5 V12 M9 6.5 V12" stroke="#ddd" stroke-width="1.2" fill="none"/></svg>
<div class="a" style="left:1256px;top:159px;width:244px;height:2px;background:#f0f0f0"></div>
<div class="a" style="left:1487px;top:161px;width:13px;height:606px;background:#f0f0f0"></div>
<svg style="left:1489px;top:166px" width="9" height="6" viewBox="0 0 9 6"><path d="M1.5 5 L4.5 1.5 L7.5 5 Z" fill="#888"/></svg>
<svg style="left:1489px;top:757px" width="9" height="6" viewBox="0 0 9 6"><path d="M1.5 1 L4.5 4.5 L7.5 1 Z" fill="#888"/></svg>
<svg style="left:1267px;top:178px" width="8" height="11" viewBox="0 0 8 11"><path d="M2 1.5 L6 5.5 L2 9.5" stroke="#333" stroke-width="1.4" fill="none"/></svg>
<svg style="left:1285px;top:176px" width="17" height="16" viewBox="0 0 17 16"><path d="M1 4 V1 H4 M13 1 H16 V4 M16 12 V15 H13 M4 15 H1 V12" stroke="#333" stroke-width="1.4" fill="none"/><rect x="4.5" y="4" width="5" height="5" stroke="#333" stroke-width="1.3" fill="none"/><rect x="7.5" y="7" width="5" height="5" stroke="#333" stroke-width="1.3" fill="none"/></svg>
<div class="t" style="left:1309px;top:179px;font-size:11.2px;letter-spacing:0.1px;color:#3a3a3a">svg-01-stained-glass-autu...</div>
<!-- panel bottom -->
<div class="a" style="left:1256px;top:766px;width:244px;height:2px;background:#f2f2f2"></div>
<div class="a" style="left:1268px;top:778px;width:16px;height:16px;border:1px solid #e4e4e4;border-radius:3px"></div>
<div class="t" style="left:1290px;top:781px;font-size:10px;color:#444">Background Color</div>
<div class="a" style="left:1256px;top:804px;width:244px;height:2px;background:#f2f2f2"></div>
<svg style="left:1276px;top:810px" width="300" height="30" viewBox="0 0 300 30">
<g stroke="#e6e6e6" stroke-width="1.2" fill="none">
<rect x="2" y="2" width="10" height="10"/><rect x="6" y="6" width="10" height="10"/>
<rect x="42" y="2" width="10" height="10"/><circle cx="51" cy="12" r="5"/><path d="M60 6 L62 8 L64 6"/>
<rect x="89" y="5" width="16" height="6" rx="3"/>
<path d="M134 1 V9 M131 6 L134 9 L137 6 M128 9 Q134 15 140 9"/>
<circle cx="186" cy="8" r="7" stroke-dasharray="2 2"/>
</g>
<g font-family="Liberation Sans" font-size="7.5" fill="#e6e6e6"><text x="4" y="26">Slice</text><text x="40" y="26">Combine</text><text x="89" y="26">Attach</text><text x="131" y="26">Flatten</text><text x="171" y="26">Contour</text></g>
</svg>
<!-- cursor -->
<svg style="left:530px;top:345px" width="20" height="22" viewBox="0 0 20 22"><path d="M6.7 4.3 L6.7 14.6 L9.2 12.3 L11.8 18 L13.6 17.2 L11.1 11.6 L14.2 11.4 Z" fill="#000"/></svg>
<!-- zoom control (faint) -->
<div class="a" style="left:82px;top:798px;width:86px;height:26px;background:#fff;border-radius:6px;box-shadow:0 0 2px rgba(0,0,0,0.15)"></div>
<div class="a" style="left:0;top:843px;width:1500px;height:1px;background:#3a3a3a"></div>
<!-- watermark overlay -->
<div class="a" style="left:0;top:797px;width:261px;height:47px;background:rgba(255,255,255,0.55)"></div>
<svg style="left:84px;top:801px" width="84" height="20" viewBox="0 0 84 20"><circle cx="8" cy="10" r="6.5" stroke="#e6e6e6" stroke-width="1" fill="none"/><path d="M5 10 H11" stroke="#e6e6e6"/><text x="20" y="14" font-family="Liberation Sans" font-size="11" fill="#ececec">100%</text><circle cx="75" cy="10" r="6.5" stroke="#e6e6e6" stroke-width="1" fill="none"/><path d="M72 10 H78 M75 7 V13" stroke="#e6e6e6"/></svg>
<div class="t" style="left:12px;top:803px;font-family:'Liberation Serif',serif;font-weight:bold;font-size:33px;color:#196a86;letter-spacing:-0.6px;transform-origin:0 0;transform:scaleX(1.03)">Craft with Sarah</div>
<svg style="left:0;top:780px" width="300" height="64" viewBox="0 780 300 64"><g stroke="#196a86" stroke-width="2.8" fill="none" stroke-linecap="round">
<path d="M70 829 Q69.5 836.5 63.5 835.5"/><path d="M154 829 Q155.5 836 162 834.5"/><path d="M200 829 Q201 836 207.5 834.5"/><path d="M214 808 Q219 813 225 808.5"/><path d="M118 812 Q121 806.5 126 807"/>
</g><g fill="#196a86"><circle cx="63" cy="833.8" r="2.3"/><circle cx="162.5" cy="833" r="2.3"/><circle cx="208" cy="833" r="2.2"/><circle cx="126" cy="808.5" r="2.3"/></g></svg>
</body></html>
